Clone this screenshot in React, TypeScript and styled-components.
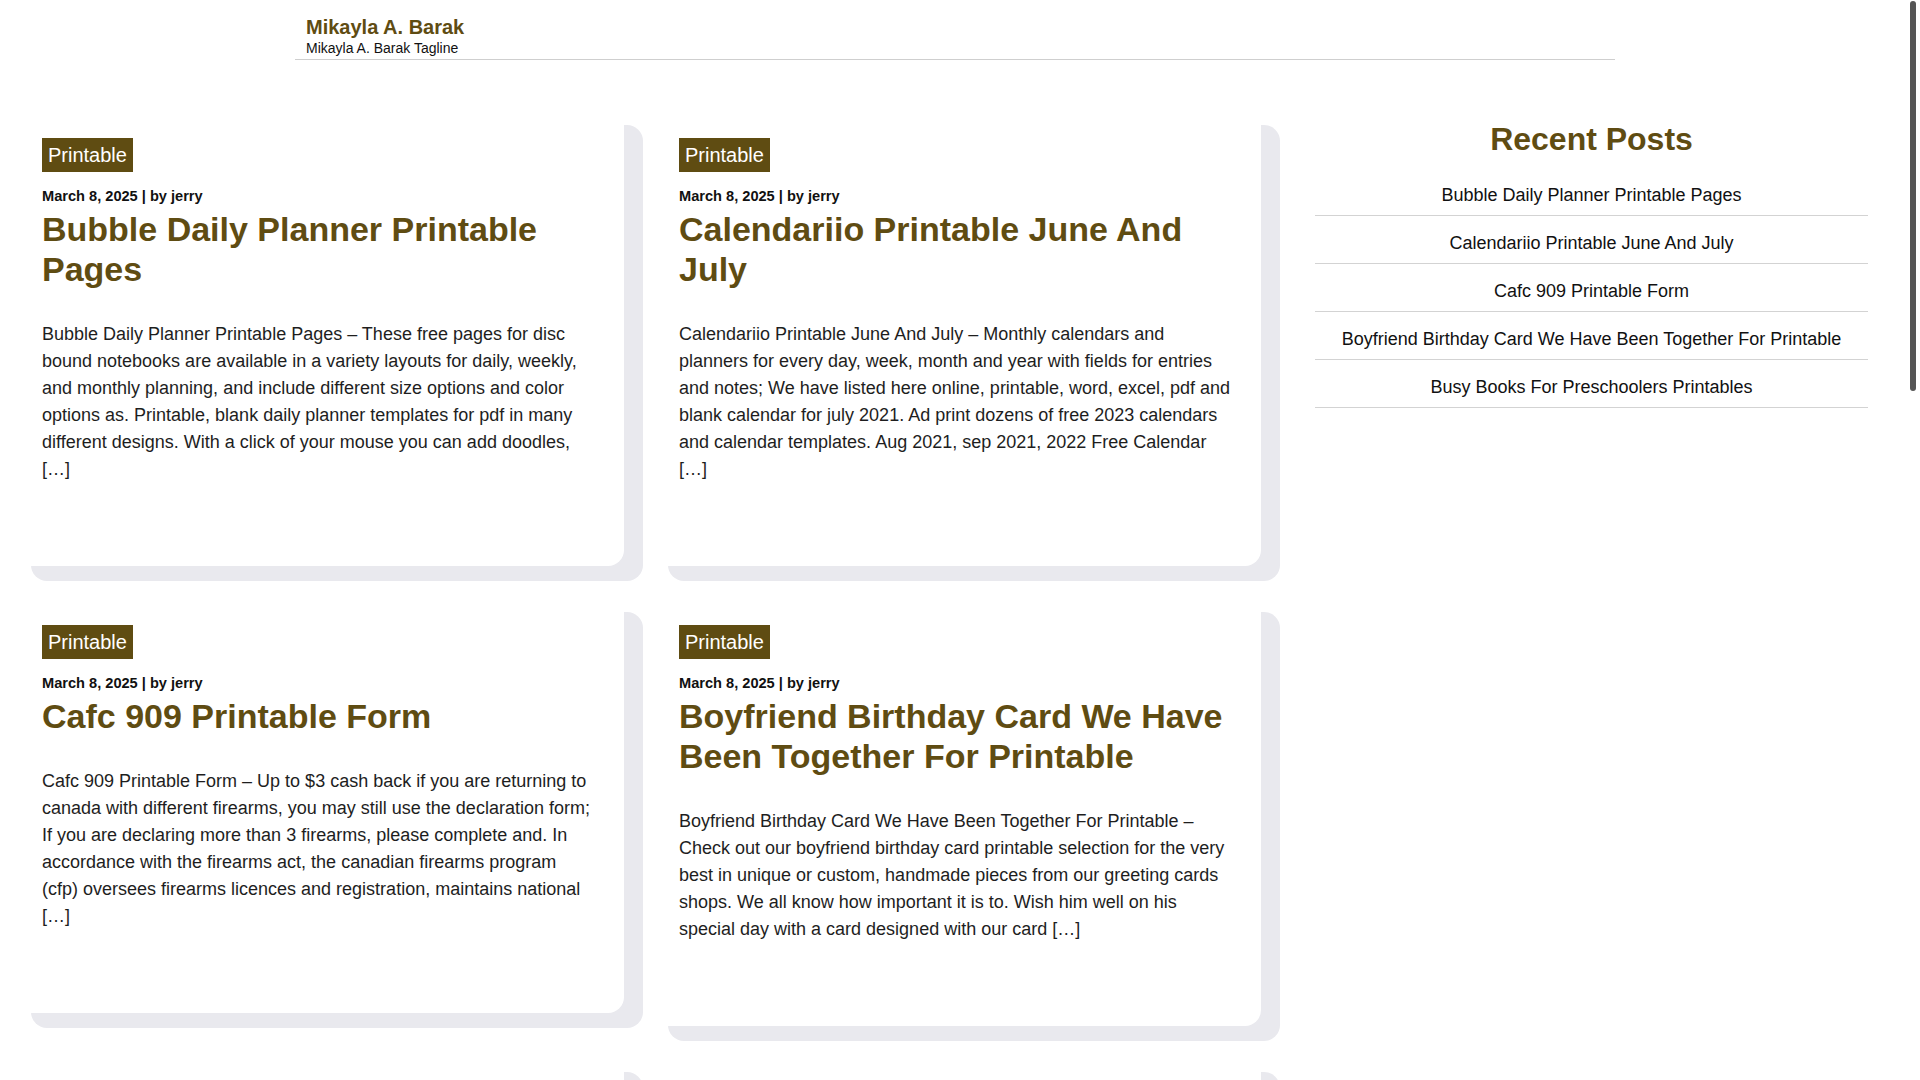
import styled, { createGlobalStyle } from 'styled-components';

const brown = '#5f4c12';

const GlobalStyle = createGlobalStyle`
  html, body {
    margin: 0;
    padding: 0;
    background: #fff;
  }
  body {
    font-family: "Liberation Sans", Arial, Helvetica, sans-serif;
    color: #222;
  }
  * {
    box-sizing: border-box;
  }
`;

const Page = styled.div`
  width: 1905px;
`;

// the page scrollbar seen at the right edge of the window
const ScrollThumb = styled.div`
  position: fixed;
  top: 1px;
  right: 4px;
  width: 6px;
  height: 390px;
  border-radius: 3px;
  background: #555;
`;

const SiteHeader = styled.header`
  width: 1320px;
  margin: 0 0 0 295px;
  padding: 15px 11px 2px;
  border-bottom: 1px solid #cfcfcf;
`;

const SiteTitle = styled.a`
  display: block;
  font-size: 20px;
  line-height: 25px;
  font-weight: 700;
  color: ${brown};
  text-decoration: none;
`;

const Tagline = styled.div`
  font-size: 14px;
  line-height: 17px;
  color: #111;
`;

const Layout = styled.div`
  display: flex;
  align-items: flex-start;
  gap: 54px;
  padding: 50px 0 430px 12px;
`;

const PostGrid = styled.main`
  display: grid;
  grid-template-columns: 612px 612px;
  column-gap: 25px;
  row-gap: 31px;
  align-items: start;
`;

const Card = styled.article`
  background: #fff;
  border-radius: 16px;
  box-shadow: 19px 15px 0 #e9e9ee;
  padding: 28px 30px 83px;
`;

const Badge = styled.a`
  display: inline-block;
  background: ${brown};
  color: #fff;
  font-size: 20px;
  line-height: 24px;
  padding: 5px 6px;
  text-decoration: none;
`;

const Meta = styled.div`
  margin-top: 14px;
  font-size: 14.6px;
  line-height: 21px;
  font-weight: 700;
  color: #111;
`;

const PostTitle = styled.h2`
  margin: 2px 0 0;
  font-size: 34px;
  line-height: 40px;
  font-weight: 700;
  color: ${brown};
`;

const Excerpt = styled.p`
  margin: 32px 0 0;
  font-size: 18px;
  line-height: 27px;
  color: #1e1e1e;
`;

const Sidebar = styled.aside`
  width: 553px;
  margin-top: 10px;
`;

const WidgetTitle = styled.h2`
  margin: 0 0 10px;
  text-align: center;
  font-size: 32px;
  line-height: 38px;
  font-weight: 700;
  color: ${brown};
`;

const RecentList = styled.ul`
  list-style: none;
  margin: 0;
  padding: 0;
`;

const RecentItem = styled.li`
  padding: 14px 0 6px;
  border-bottom: 1px solid #d3d3d3;
  text-align: center;
  font-size: 18px;
  line-height: 27px;
  color: #111;
`;

type Post = { title: string; excerpt: string };

const posts: Post[] = [
  {
    title: 'Bubble Daily Planner Printable Pages',
    excerpt:
      'Bubble Daily Planner Printable Pages – These free pages for disc bound notebooks are available in a variety layouts for daily, weekly, and monthly planning, and include different size options and color options as. Printable, blank daily planner templates for pdf in many different designs. With a click of your mouse you can add doodles, […]',
  },
  {
    title: 'Calendariio Printable June And July',
    excerpt:
      'Calendariio Printable June And July – Monthly calendars and planners for every day, week, month and year with fields for entries and notes; We have listed here online, printable, word, excel, pdf and blank calendar for july 2021. Ad print dozens of free 2023 calendars and calendar templates. Aug 2021, sep 2021, 2022 Free Calendar […]',
  },
  {
    title: 'Cafc 909 Printable Form',
    excerpt:
      'Cafc 909 Printable Form – Up to $3 cash back if you are returning to canada with different firearms, you may still use the declaration form; If you are declaring more than 3 firearms, please complete and. In accordance with the firearms act, the canadian firearms program (cfp) oversees firearms licences and registration, maintains national […]',
  },
  {
    title: 'Boyfriend Birthday Card We Have Been Together For Printable',
    excerpt:
      'Boyfriend Birthday Card We Have Been Together For Printable – Check out our boyfriend birthday card printable selection for the very best in unique or custom, handmade pieces from our greeting cards shops. We all know how important it is to. Wish him well on his special day with a card designed with our card […]',
  },
  {
    title: 'Busy Books For Preschoolers Printables',
    excerpt:
      'Busy Books For Preschoolers Printables – Quiet books are a great way to keep little hands busy while building fine motor skills, color matching and counting. Print the pages, laminate them and add velcro dots so your preschooler can play again and again. These free printables are perfect for travel, waiting rooms and […]',
  },
  {
    title: 'Printable Bingo Cards For Adults',
    excerpt:
      'Printable Bingo Cards For Adults – Bingo is a fun game for parties, showers and game nights. Create your own cards with custom words or numbers, or choose from dozens of ready made themes. Simply print the cards on card stock, grab some markers and you are ready to play with friends and family […]',
  },
  {
    title: 'Free Printable Monthly Budget Planner',
    excerpt:
      'Free Printable Monthly Budget Planner – Keep track of your income, bills and savings goals with a simple monthly budget sheet. These templates come in several colors and layouts, so you can pick the one that suits your style. Print a new page every month and watch your progress add up over the year […]',
  },
  {
    title: 'Printable Chore Chart For Kids',
    excerpt:
      'Printable Chore Chart For Kids – A chore chart helps children learn responsibility and builds good habits at home. Choose a weekly or daily chart, write in the tasks and let the kids add a sticker for every job they finish. Download the free pdf files and print as many copies as you need for the […]',
  },
  {
    title: 'Printable Weekly Meal Planner Template',
    excerpt:
      'Printable Weekly Meal Planner Template – Planning your meals ahead saves time, money and stress during the busy week. Use these free templates to write down breakfast, lunch, dinner and snacks, then add the ingredients to the attached grocery list. Print them on letter or a4 paper and hang them on your fridge […]',
  },
  {
    title: 'Printable Thank You Cards For Teachers',
    excerpt:
      'Printable Thank You Cards For Teachers – Show your appreciation with a handmade card at the end of the school year. Pick a design, print it on card stock and let your child write a personal message inside. There are cute options with apples, pencils and books that every teacher will love to […]',
  },
];

const recent = posts.slice(0, 5).map(p => p.title);

const PostCard = ({ post }: { post: Post }) => (
  <Card>
    <Badge href="#">Printable</Badge>
    <Meta>March 8, 2025 | by jerry</Meta>
    <PostTitle>{post.title}</PostTitle>
    <Excerpt>{post.excerpt}</Excerpt>
  </Card>
);

const App = () => {
  return (
    <Page>
      <GlobalStyle />
      <SiteHeader>
        <SiteTitle href="#">Mikayla A. Barak</SiteTitle>
        <Tagline>Mikayla A. Barak Tagline</Tagline>
      </SiteHeader>
      <Layout>
        <PostGrid>
          {posts.map(p => (
            <PostCard key={p.title} post={p} />
          ))}
        </PostGrid>
        <Sidebar>
          <WidgetTitle>Recent Posts</WidgetTitle>
          <RecentList>
            {recent.map(t => (
              <RecentItem key={t}>{t}</RecentItem>
            ))}
          </RecentList>
        </Sidebar>
      </Layout>
      <ScrollThumb />
    </Page>
  );
};

export default App;
